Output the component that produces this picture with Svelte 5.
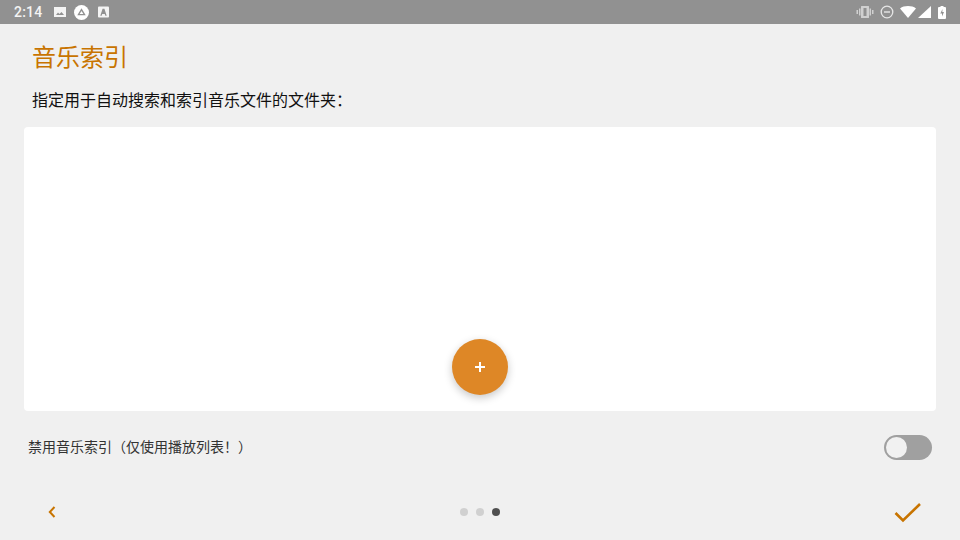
<script>
    let indexOff = $state(false);
    const pages = [0, 1, 2];
    let current = 2;
</script>

<div class="screen">
    <div class="status">
        <span class="time">2:14</span>
        <svg class="ic first" width="12" height="12" viewBox="0 0 12 12"><path d="M0 1h12v10H0z" fill="#f4f4f4"/><path d="M2 9l2-2.500 1.500 1.500L7.500 6 10 9z" fill="#919191"/></svg>
        <svg class="ic" width="15" height="15" viewBox="0 0 16 16"><circle cx="8" cy="8" r="8" fill="#fff"/><path d="M8 3.500l4.500 7.500h-9z" fill="#919191"/><path d="M8 6.500l2 3.200H6z" fill="#fff"/></svg>
        <svg class="ic last" width="11" height="12" viewBox="0 0 12 12"><path d="M1 0h10a1 1 0 0 1 1 1v10a1 1 0 0 1-1 1H1a1 1 0 0 1-1-1V1a1 1 0 0 1 1-1z" fill="#f4f4f4"/><path d="M5 2.500h2L9.500 10H8L7.400 8.200H4.600L4 10H2.500z" fill="#919191"/></svg>
        <span class="spacer"></span>
        <svg class="sys" width="18" height="12" viewBox="0 0 18 12"><path d="M5.500 0h7a.5.500 0 0 1 .5.500v11a.5.500 0 0 1-.5.500h-7a.5.500 0 0 1-.5-.500V.500a.5.500 0 0 1 .5-.500zM7.500 2v8h3V2z" fill="#d0d0d0" fill-rule="evenodd"/><path d="M3 2.500h1.500v7H3zM13.500 2.500H15v7h-1.500zM.5 4H2v4H.5zM16 4h1.500v4H16z" fill="#d0d0d0"/></svg>
        <svg class="sys" width="14" height="14" viewBox="0 0 14 14"><circle cx="7" cy="7" r="5.800" fill="none" stroke="#e6e6e6" stroke-width="1.300"/><path d="M4 6.300h6v1.400H4z" fill="#e6e6e6"/></svg>
        <svg class="sys" width="16" height="12" viewBox="0 0 16 12"><path d="M0 2.400C2 .8 5 0 8 0s6 .8 8 2.400L8 12z" fill="#fff"/></svg>
        <svg class="sys tight" width="13" height="12" viewBox="0 0 13 12"><path d="M13 0v12H0z" fill="#fff"/></svg>
        <svg class="sys batt" width="8" height="13" viewBox="0 0 8 13"><path d="M2.500 0h3v1H7a1 1 0 0 1 1 1v10a1 1 0 0 1-1 1H1a1 1 0 0 1-1-1V2a1 1 0 0 1 1-1h1.500z" fill="#fff"/><path d="M4.500 3L2.300 7.500H4V10.500L6 6H4.300z" fill="#919191"/></svg>
    </div>

    <div class="content">
        <h1>音乐索引</h1>
        <p class="hint">指定用于自动搜索和索引音乐文件的文件夹：</p>

        <div class="card">
            <button class="fab" aria-label="添加">
                <svg width="10" height="10" viewBox="0 0 10 10"><path d="M4 0h2v4h4v2H6v4H4V6H0V4h4z" fill="#fff"/></svg>
            </button>
        </div>

        <div class="option">
            <span>禁用音乐索引（仅使用播放列表！）</span>
            <button class="switch" class:on={indexOff} aria-label="禁用音乐索引" onclick={() => (indexOff = !indexOff)}>
                <span class="knob"></span>
            </button>
        </div>
    </div>

    <div class="nav">
        <button class="back" aria-label="上一步">
            <svg width="10" height="14" viewBox="0 0 10 14"><path d="M7.500 2L2.800 7l4.700 5" fill="none" stroke="#c87400" stroke-width="2"/></svg>
        </button>
        <div class="dots">
            {#each pages as p}
                <span class="dot" class:active={p === current}></span>
            {/each}
        </div>
        <button class="done" aria-label="完成">
            <svg width="28" height="22" viewBox="0 0 28 22"><path d="M1.500 12l7.500 7.500L26 3" fill="none" stroke="#c87400" stroke-width="2.600"/></svg>
        </button>
    </div>
</div>

<style>
    :global(body) {
        margin: 0;
        background: #f0f0f0;
    }

    .screen {
        width: 960px;
        height: 540px;
        display: flex;
        flex-direction: column;
        background: #f0f0f0;
        font-family: Roboto, "Noto Sans CJK SC", sans-serif;
        overflow: hidden;
    }

    .status {
        height: 24px;
        flex: none;
        display: flex;
        align-items: center;
        padding: 0 14px;
        box-sizing: border-box;
        background: #919191;
    }

    .time {
        font-size: 14px;
        font-weight: 500;
        color: #f4f4f4;
        letter-spacing: 0.2px;
    }

    .ic {
        margin-left: 8px;
    }

    .ic.first {
        margin-left: 12px;
    }

    .ic.last {
        margin-left: 9px;
    }

    .spacer {
        flex: 1;
    }

    .sys {
        margin-left: 6px;
    }

    .sys.tight {
        margin-left: 2px;
    }

    .sys.batt {
        margin-left: 7px;
    }

    .content {
        flex: 1;
        display: flex;
        flex-direction: column;
        padding: 0 24px;
    }

    h1 {
        margin: 17px 0 0 8px;
        font-size: 24px;
        line-height: 34px;
        font-weight: 400;
        color: #c87400;
    }

    .hint {
        margin: 15px 0 0 8px;
        font-size: 16px;
        line-height: 22px;
        color: #111;
    }

    .card {
        height: 284px;
        margin-top: 15px;
        display: flex;
        align-items: flex-end;
        justify-content: center;
        padding-bottom: 16px;
        box-sizing: border-box;
        background: #fff;
        border-radius: 4px;
    }

    .fab {
        width: 56px;
        height: 56px;
        padding: 0;
        display: flex;
        align-items: center;
        justify-content: center;
        border: none;
        border-radius: 50%;
        background: #de8726;
        box-shadow: 0 3px 8px rgba(0, 0, 0, 0.22);
    }

    .option {
        display: flex;
        align-items: center;
        justify-content: space-between;
        margin-top: 24px;
        padding: 0 4px;
        font-size: 14px;
        line-height: 25px;
        color: #333;
    }

    .switch {
        width: 48px;
        height: 25px;
        padding: 0;
        border: none;
        border-radius: 13px;
        background: #a0a0a0;
        display: flex;
        align-items: center;
    }

    .knob {
        width: 21px;
        height: 21px;
        margin-left: 2px;
        border-radius: 50%;
        background: #f1f1f1;
    }

    .switch.on {
        background: #de8726;
        justify-content: flex-end;
    }

    .switch.on .knob {
        margin: 0 2px 0 0;
    }

    .nav {
        height: 56px;
        flex: none;
        display: grid;
        grid-template-columns: 1fr auto 1fr;
        align-items: center;
        padding: 0 38px;
        box-sizing: border-box;
    }

    .nav button {
        padding: 0;
        border: none;
        background: none;
        display: flex;
    }

    .done {
        justify-self: end;
    }

    .back {
        justify-self: start;
        margin-left: 9px;
    }

    .dots {
        display: flex;
        gap: 8px;
    }

    .dot {
        width: 8px;
        height: 8px;
        border-radius: 50%;
        background: #d0d0d0;
    }

    .dot.active {
        background: #4f4f4f;
    }
</style>
